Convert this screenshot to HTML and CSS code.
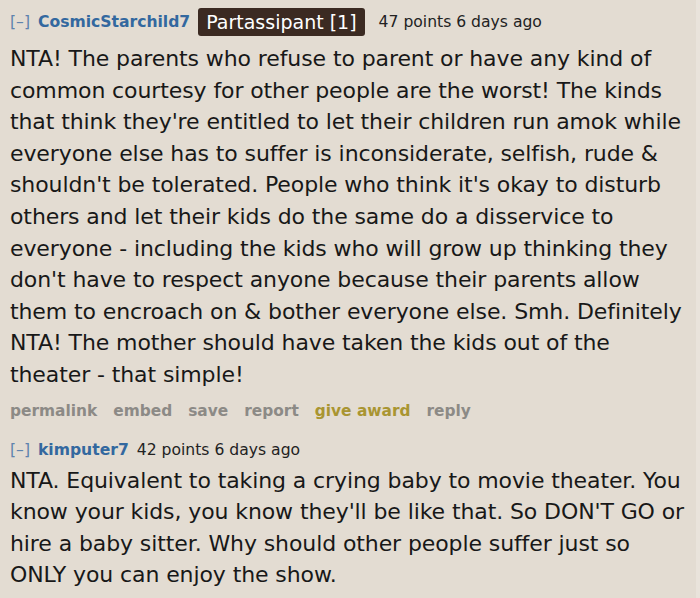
FILE: index.html
```html
<!DOCTYPE html>
<html>
<head>
<meta charset="utf-8">
<link rel="stylesheet" href="styles.css">
</head>
<body>
<div class="page">
  <div class="comment">
    <div class="tagline">
      <span class="toggle">[–]</span>
      <span class="author">CosmicStarchild7</span>
      <span class="flair">Partassipant [1]</span>
      <span class="meta">47 points 6 days ago</span>
    </div>
    <p class="body">NTA! The parents who refuse to parent or have any kind of<br>common courtesy for other people are the worst! The kinds<br>that think they're entitled to let their children run amok while<br>everyone else has to suffer is inconsiderate, selfish, rude &amp;<br>shouldn't be tolerated. People who think it's okay to disturb<br>others and let their kids do the same do a disservice to<br>everyone - including the kids who will grow up thinking they<br>don't have to respect anyone because their parents allow<br>them to encroach on &amp; bother everyone else. Smh. Definitely<br>NTA! The mother should have taken the kids out of the<br>theater - that simple!</p>
    <div class="buttons">
      <span>permalink</span>
      <span>embed</span>
      <span>save</span>
      <span>report</span>
      <span class="award">give award</span>
      <span>reply</span>
    </div>
  </div>
  <div class="comment">
    <div class="tagline">
      <span class="toggle">[–]</span>
      <span class="author">kimputer7</span>
      <span class="meta">42 points 6 days ago</span>
    </div>
    <p class="body">NTA. Equivalent to taking a crying baby to movie theater. You<br>know your kids, you know they'll be like that. So DON'T GO or<br>hire a baby sitter. Why should other people suffer just so<br>ONLY you can enjoy the show.</p>
  </div>
</div>
</body>
</html>
```
FILE: styles.css
```css
html, body {
  margin: 0;
  padding: 0;
  background: #e9e3db;
}
.page {
  width: 696px;
  height: 598px;
  background: #e3dcd2;
  font-family: "DejaVu Sans", Verdana, sans-serif;
  color: #181818;
  overflow: hidden;
}
.comment {
  padding-left: 10px;
}
.tagline {
  display: flex;
  align-items: center;
  height: 30px;
  padding-top: 7px;
  font-size: 15.6px;
}
.toggle {
  color: #5f83ad;
  margin-right: 8px;
}
.author {
  color: #33689f;
  font-weight: bold;
  margin-right: 8px;
}
.flair {
  background: #3b2a22;
  color: #ffffff;
  font-size: 19px;
  padding: 2px 8px;
  border-radius: 3px;
  margin-right: 14px;
  line-height: 24px;
}
.meta {
  color: #222;
}
.body {
  margin: 6px 0 0 0;
  font-size: 22px;
  letter-spacing: -0.1px;
  line-height: 31.6px;
  white-space: nowrap;
}
.comment + .comment .body {
  margin-top: 0;
}
.buttons {
  display: flex;
  gap: 16px;
  font-size: 15.4px;
  font-weight: bold;
  color: #8c8a86;
  margin-top: 6px;
  margin-bottom: 3px;
  height: 28px;
  align-items: center;
}
.buttons .award {
  color: #a99531;
}
```
